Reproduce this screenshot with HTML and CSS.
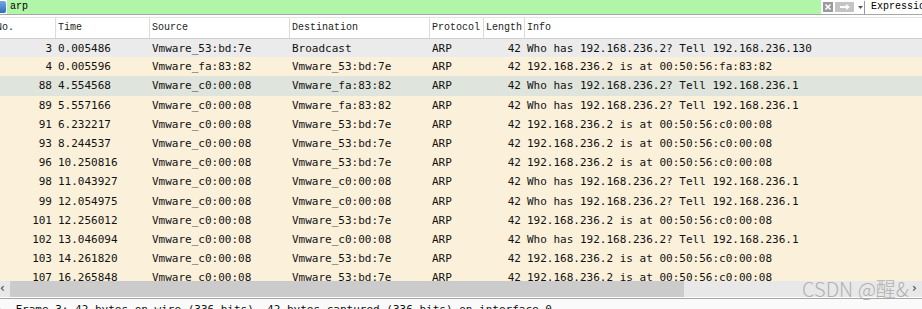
FILE: index.html
```html
<!DOCTYPE html>
<html>
<head>
<meta charset="utf-8">
<link rel="stylesheet" href="styles.css">
</head>
<body>
<div class="app">
  <div class="filterbar">
    <span class="ficon"></span>
    <div class="finput">arp</div>
    <div class="fbtns">
      <span class="btn-clear"><svg width="10" height="10" viewBox="0 0 10 10"><path d="M2.5 2.5L7.5 7.5M7.5 2.5L2.5 7.5" stroke="#fff" stroke-width="1.6"/></svg></span>
      <span class="btn-apply"><svg width="14" height="8" viewBox="0 0 14 8"><path d="M2 3h6V1l4 3-4 3V5H2z" fill="#fff"/></svg></span>
      <span class="btn-drop"><svg width="5" height="3" viewBox="0 0 5 3"><path d="M0 0h5L2.5 3z" fill="#555"/></svg></span>
    </div>
    <div class="expr">Expression…</div>
  </div>
  <div class="list">
    <div class="row head">
      <div class="c no">No.</div><div class="c">Time</div><div class="c">Source</div><div class="c">Destination</div><div class="c">Protocol</div><div class="c">Length</div><div class="c last">Info</div>
    </div>
    <div class="rows">
      <div class="row sel"><div class="c r">3</div><div class="c">0.005486</div><div class="c">Vmware_53:bd:7e</div><div class="c">Broadcast</div><div class="c">ARP</div><div class="c r">42</div><div class="c">Who has 192.168.236.2? Tell 192.168.236.130</div></div>
      <div class="row"><div class="c r">4</div><div class="c">0.005596</div><div class="c">Vmware_fa:83:82</div><div class="c">Vmware_53:bd:7e</div><div class="c">ARP</div><div class="c r">42</div><div class="c">192.168.236.2 is at 00:50:56:fa:83:82</div></div>
      <div class="row mark"><div class="c r">88</div><div class="c">4.554568</div><div class="c">Vmware_c0:00:08</div><div class="c">Vmware_fa:83:82</div><div class="c">ARP</div><div class="c r">42</div><div class="c">Who has 192.168.236.2? Tell 192.168.236.1</div></div>
      <div class="row"><div class="c r">89</div><div class="c">5.557166</div><div class="c">Vmware_c0:00:08</div><div class="c">Vmware_fa:83:82</div><div class="c">ARP</div><div class="c r">42</div><div class="c">Who has 192.168.236.2? Tell 192.168.236.1</div></div>
      <div class="row"><div class="c r">91</div><div class="c">6.232217</div><div class="c">Vmware_c0:00:08</div><div class="c">Vmware_53:bd:7e</div><div class="c">ARP</div><div class="c r">42</div><div class="c">192.168.236.2 is at 00:50:56:c0:00:08</div></div>
      <div class="row"><div class="c r">93</div><div class="c">8.244537</div><div class="c">Vmware_c0:00:08</div><div class="c">Vmware_53:bd:7e</div><div class="c">ARP</div><div class="c r">42</div><div class="c">192.168.236.2 is at 00:50:56:c0:00:08</div></div>
      <div class="row"><div class="c r">96</div><div class="c">10.250816</div><div class="c">Vmware_c0:00:08</div><div class="c">Vmware_53:bd:7e</div><div class="c">ARP</div><div class="c r">42</div><div class="c">192.168.236.2 is at 00:50:56:c0:00:08</div></div>
      <div class="row"><div class="c r">98</div><div class="c">11.043927</div><div class="c">Vmware_c0:00:08</div><div class="c">Vmware_c0:00:08</div><div class="c">ARP</div><div class="c r">42</div><div class="c">Who has 192.168.236.2? Tell 192.168.236.1</div></div>
      <div class="row"><div class="c r">99</div><div class="c">12.054975</div><div class="c">Vmware_c0:00:08</div><div class="c">Vmware_c0:00:08</div><div class="c">ARP</div><div class="c r">42</div><div class="c">Who has 192.168.236.2? Tell 192.168.236.1</div></div>
      <div class="row"><div class="c r">101</div><div class="c">12.256012</div><div class="c">Vmware_c0:00:08</div><div class="c">Vmware_53:bd:7e</div><div class="c">ARP</div><div class="c r">42</div><div class="c">192.168.236.2 is at 00:50:56:c0:00:08</div></div>
      <div class="row"><div class="c r">102</div><div class="c">13.046094</div><div class="c">Vmware_c0:00:08</div><div class="c">Vmware_c0:00:08</div><div class="c">ARP</div><div class="c r">42</div><div class="c">Who has 192.168.236.2? Tell 192.168.236.1</div></div>
      <div class="row"><div class="c r">103</div><div class="c">14.261820</div><div class="c">Vmware_c0:00:08</div><div class="c">Vmware_53:bd:7e</div><div class="c">ARP</div><div class="c r">42</div><div class="c">192.168.236.2 is at 00:50:56:c0:00:08</div></div>
      <div class="row"><div class="c r">107</div><div class="c">16.265848</div><div class="c">Vmware_c0:00:08</div><div class="c">Vmware_53:bd:7e</div><div class="c">ARP</div><div class="c r">42</div><div class="c">192.168.236.2 is at 00:50:56:c0:00:08</div></div>
    </div>
  </div>
  <div class="hscroll">
    <span class="arr">&lsaquo;</span>
    <div class="track"><div class="thumb"></div></div>
    <span class="arr">&rsaquo;</span>
    <div class="watermark">CSDN @醒&amp;</div>
  </div>
  <div class="details">
    <span class="tri">&#9655;</span> Frame 3: 42 bytes on wire (336 bits), 42 bytes captured (336 bits) on interface 0
  </div>
</div>
</body>
</html>
```
FILE: styles.css
```css
html, body { margin: 0; padding: 0; background: #fff; }
body { width: 922px; height: 309px; overflow: hidden; }
.app { width: 922px; height: 309px; overflow: hidden; display: flex; flex-direction: column; position: relative; }

.filterbar { height: 14px; display: flex; align-items: stretch; border-bottom: 1px solid #a8a8a8; background: #fff; flex: none; overflow: hidden; }
.filterbar > * { flex-shrink: 0; }
.ficon { width: 6px; margin: 1px 1px 1px 0; background: linear-gradient(#7aa8e0, #2f6bc0); border-radius: 0 2px 2px 0; }
.finput { width: 814px; background: #b1f5a9; font-family: "Liberation Mono", monospace; font-size: 10px; line-height: 13px; padding-left: 3px; color: #000; box-sizing: border-box; }
.fbtns { display: flex; align-items: center; gap: 2px; padding-left: 2px; }
.btn-clear { width: 10px; height: 10px; background: #9b9b9b; display: flex; align-items: center; justify-content: center; }
.btn-apply { width: 19px; height: 10px; background: #c4c4c4; display: flex; align-items: center; justify-content: center; }
.btn-drop { width: 7px; height: 13px; display: flex; align-items: center; justify-content: center; border-right: 1px solid #9a9a9a; margin-left: 1px; }
.expr { font-family: "Liberation Mono", monospace; font-size: 10px; line-height: 13px; padding-left: 6px; white-space: nowrap; color: #000; }

.list { height: 264px; overflow: hidden; flex: none; margin-top: 2px; }
.row { display: grid; grid-template-columns: 56px 94px 140px 140px 54px 41px 1fr; height: 19.2px; line-height: 19px; font-family: "DejaVu Sans Mono", monospace; font-size: 11px; color: #111; background: #fbf0da; white-space: nowrap; }
.row .c { padding-left: 2px; overflow: hidden; }
.row .c.r { text-align: right; padding-right: 4px; padding-left: 0; }
.row.sel { background: #ebebeb; border-top: 1px solid #cfcfcf; box-sizing: border-box; }
.row.mark { background: #dfe4dc; }
.row.head { height: 21px; line-height: 20px; background: #fff; font-family: "Liberation Mono", monospace; font-size: 10px; color: #222; border-top: 1px solid #e4e4e4; box-sizing: border-box; }
.row.head .c { border-right: 1px solid #dcdcdc; padding-left: 2px; }
.row.head .c.no { padding-left: 0; margin-left: -4px; }
.row.head .c.last { border-right: none; }
.rows { display: flex; flex-direction: column; }

.hscroll { height: 16px; display: flex; align-items: stretch; background: #e8e8e8; flex: none; position: relative; border-bottom: 1px solid #fff; }
.arr { width: 10px; font-family: "DejaVu Sans", sans-serif; font-size: 12px; line-height: 15px; color: #333; text-align: left; }
.track { flex: 1; display: flex; }
.thumb { width: 674px; background: #cbcbcb; }
.watermark { position: absolute; left: 802px; top: -2px; font-family: "Noto Sans CJK SC", sans-serif; font-size: 20px; font-weight: 300; color: rgba(150,150,150,0.7); line-height: 20px; white-space: nowrap; }

.details { flex: 1; border-top: 1px solid #a5a5a5; background: #fafafa; font-family: "DejaVu Sans Mono", monospace; font-size: 11px; line-height: 18px; padding-top: 2px; white-space: nowrap; color: #111; }
.tri { font-size: 8px; color: #555; margin-right: 4px; }
```
